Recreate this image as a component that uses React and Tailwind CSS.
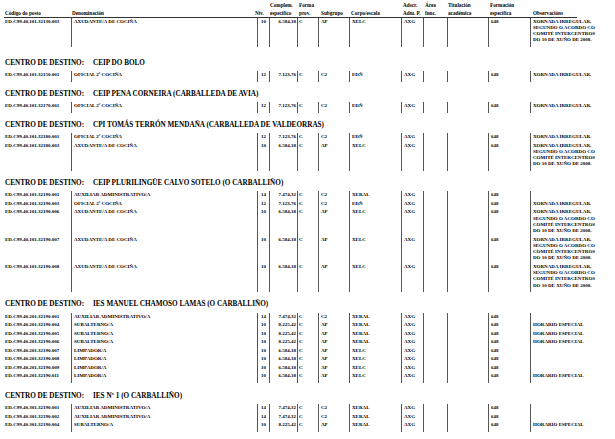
const OBS4 = ['XORNADA IRREGULAR,', 'SEGUNDO O ACORDO CO', 'COMITÉ INTERCENTROS', 'DO 10 DE XUÑO DE 2008.'];
const OBS1 = ['XORNADA IRREGULAR.'];
const HOR = ['HORARIO ESPECIAL'];

const aux = { den: 'AXUDANTE/A DE COCIÑA', niv: '10', comp: '6.584,18', sub: 'AP', corpo: 'XELC' };
const ofi = { den: 'OFICIAL 2ª COCIÑA', niv: '12', comp: '7.123,76', sub: 'C2', corpo: 'EDÑ' };
const adm = { den: 'AUXILIAR ADMINISTRATIVO/A', niv: '14', comp: '7.474,32', sub: 'C2', corpo: 'XERAL' };
const subal = { den: 'SUBALTERNO/A', niv: '10', comp: '8.225,42', sub: 'AP', corpo: 'XERAL' };
const limp = { den: 'LIMPADOR/A', niv: '10', comp: '6.584,18', sub: 'AP', corpo: 'XELC' };

const blocks = [
  { centro: null, rows: [{ code: 'ED.C99.40.101.32130.003', ...aux, obs: OBS4 }] },
  { centro: 'CEIP DO BOLO', rows: [{ code: 'ED.C99.40.101.32150.001', ...ofi, obs: OBS1 }] },
  { centro: 'CEIP PENA CORNEIRA (CARBALLEDA DE AVIA)', rows: [{ code: 'ED.C99.40.101.32170.001', ...ofi, obs: OBS1 }] },
  {
    centro: 'CPI TOMÁS TERRÓN MENDAÑA (CARBALLEDA DE VALDEORRAS)',
    rows: [
      { code: 'ED.C99.40.101.32180.001', ...ofi, obs: OBS1 },
      { code: 'ED.C99.40.101.32180.003', ...aux, obs: OBS4 },
    ],
  },
  {
    centro: 'CEIP PLURILINGÜE CALVO SOTELO (O CARBALLIÑO)',
    rows: [
      { code: 'ED.C99.40.101.32190.001', ...adm, obs: [] },
      { code: 'ED.C99.40.101.32190.003', ...ofi, obs: OBS1 },
      { code: 'ED.C99.40.101.32190.006', ...aux, obs: OBS4 },
      { code: 'ED.C99.40.101.32190.007', ...aux, obs: OBS4 },
      { code: 'ED.C99.40.101.32190.008', ...aux, obs: OBS4 },
    ],
  },
  {
    centro: 'IES MANUEL CHAMOSO LAMAS (O CARBALLIÑO)',
    rows: [
      { code: 'ED.C99.40.201.32190.001', ...adm, obs: [] },
      { code: 'ED.C99.40.201.32190.004', ...subal, obs: HOR },
      { code: 'ED.C99.40.201.32190.005', ...subal, obs: HOR },
      { code: 'ED.C99.40.201.32190.006', ...subal, obs: HOR },
      { code: 'ED.C99.40.201.32190.007', ...limp, obs: [] },
      { code: 'ED.C99.40.201.32190.008', ...limp, obs: [] },
      { code: 'ED.C99.40.201.32190.009', ...limp, obs: [] },
      { code: 'ED.C99.40.201.32190.011', ...limp, obs: HOR },
    ],
  },
  {
    centro: 'IES Nº 1 (O CARBALLIÑO)',
    rows: [
      { code: 'ED.C99.40.301.32190.001', ...adm, obs: [] },
      { code: 'ED.C99.40.301.32190.002', ...adm, obs: [] },
      { code: 'ED.C99.40.301.32190.004', ...subal, obs: HOR },
    ],
  },
];

const cell = 'border-l border-[#555] pt-[1px] pb-[1.25px] shrink-0';
const gap = 'border-l border-[#555] h-[2px] shrink-0';

function Row({ r }) {
  return (
    <div className="flex">
      <div className="w-[71px] shrink-0 pl-[5px] pt-[1px] pb-[1.25px] whitespace-nowrap">{r.code}</div>
      <div className={`w-[186px] pl-[2px] whitespace-nowrap ${cell}`}>{r.den}</div>
      <div className={`w-[12px] pl-[3px] ${cell}`}>{r.niv}</div>
      <div className={`w-[28px] pr-[1px] text-right ${cell}`}>{r.comp}</div>
      <div className={`w-[21px] pl-[1px] ${cell}`}>C</div>
      <div className={`w-[31px] pl-[2px] ${cell}`}>{r.sub}</div>
      <div className={`w-[52px] pl-[2px] ${cell}`}>{r.corpo}</div>
      <div className={`w-[22px] pl-[2px] ${cell}`}>AXG</div>
      <div className={`w-[24px] ${cell}`}></div>
      <div className={`w-[41px] ${cell}`}></div>
      <div className={`w-[42px] pl-[2px] ${cell}`}>648</div>
      <div className={`w-[85px] pl-[2px] whitespace-nowrap ${cell}`}>
        {r.obs.length ? r.obs.map((o) => <div key={o}>{o}</div>) : '\u00a0'}
      </div>
    </div>
  );
}

function BlockEnd() {
  return (
    <div className="flex">
      <div className="w-[71px] shrink-0 h-[2px]"></div>
      <div className={`w-[186px] ${gap}`}></div>
      <div className={`w-[12px] ${gap}`}></div>
      <div className={`w-[28px] ${gap}`}></div>
      <div className={`w-[21px] ${gap}`}></div>
      <div className={`w-[31px] ${gap}`}></div>
      <div className={`w-[52px] ${gap}`}></div>
      <div className={`w-[22px] ${gap}`}></div>
      <div className={`w-[24px] ${gap}`}></div>
      <div className={`w-[41px] ${gap}`}></div>
      <div className={`w-[42px] ${gap}`}></div>
      <div className={`w-[85px] ${gap}`}></div>
    </div>
  );
}

function Header() {
  return (
    <div className="text-[5.2px] leading-[8px] font-bold pt-[0.5px]">
      <div className="flex whitespace-nowrap">
        <div className="w-[71px] shrink-0 pl-[5px] pt-[8px]">Código do posto</div>
        <div className="w-[186px] shrink-0 pl-[1px] pt-[8px]">Denominación</div>
        <div className="w-[12px] shrink-0 -ml-[2px] pt-[8px]">Nív.</div>
        <div className="w-[30px] shrink-0 pl-[3px]">
          <div>Complem.</div>
          <div>específico</div>
        </div>
        <div className="w-[21px] shrink-0 pl-[2px]">
          <div>Forma</div>
          <div>prov.</div>
        </div>
        <div className="w-[31px] shrink-0 pl-[3px] pt-[8px]">Subgrupo</div>
        <div className="w-[52px] shrink-0 pl-[2px] pt-[8px]">Corpo/escala</div>
        <div className="w-[22px] shrink-0 pl-[2px]">
          <div>Adscr.</div>
          <div>Adm. P.</div>
        </div>
        <div className="w-[24px] shrink-0 pl-[2px]">
          <div>Área</div>
          <div>func.</div>
        </div>
        <div className="w-[41px] shrink-0 pl-[1px]">
          <div>Titulación</div>
          <div>académica</div>
        </div>
        <div className="w-[42px] shrink-0 pl-[2px]">
          <div>Formación</div>
          <div>específica</div>
        </div>
        <div className="shrink-0 pl-[3px] pt-[8px]">Observacións</div>
      </div>
      <div className="ml-[4px] w-[573px] h-px bg-[#333]"></div>
    </div>
  );
}

export default function App() {
  return (
    <div className="w-[615px] h-[439px] overflow-hidden bg-white text-black font-['Liberation_Serif',serif]">
      <Header />
      {blocks.map((b, i) => (
        <div key={i}>
          {b.centro && (
            <div className={`flex items-center h-[10px] pl-[5px] mb-[2.75px] text-[7.2px] font-bold whitespace-nowrap ${i === 1 ? 'mt-[11.5px]' : i === 6 ? 'mt-[9px]' : 'mt-[7.75px]'}`}>
              <span className="w-[88px] shrink-0">CENTRO DE DESTINO:</span>
              <span>{b.centro}</span>
            </div>
          )}
          <div className="text-[5px] leading-[6.25px] font-bold">
            {b.rows.map((r) => (
              <Row key={r.code} r={r} />
            ))}
            <BlockEnd />
          </div>
        </div>
      ))}
    </div>
  );
}
